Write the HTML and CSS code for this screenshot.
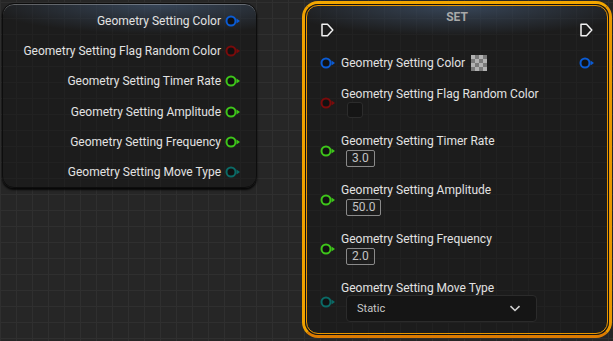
FILE: index.html
```html
<!DOCTYPE html>
<html lang="en">
<head>
    <meta charset="UTF-8">
    <title>Blueprint - Set Geometry Settings</title>
    <link rel="stylesheet" href="styles.css">
</head>
<body>
    <div class="canvas">
        <!-- variable getter node -->
        <div class="node node-vars">
            <ul class="out-list">
                <li class="out-row">Geometry Setting Color
                    <svg class="pin pin-blue" viewBox="0 0 16 12"><circle cx="6" cy="6" r="4.5"/><path d="M11.5 3.5 L15 6 L11.5 8.5 Z"/></svg>
                </li>
                <li class="out-row">Geometry Setting Flag Random Color
                    <svg class="pin pin-red" viewBox="0 0 16 12"><circle cx="6" cy="6" r="4.5"/><path d="M11.5 3.5 L15 6 L11.5 8.5 Z"/></svg>
                </li>
                <li class="out-row">Geometry Setting Timer Rate
                    <svg class="pin pin-green" viewBox="0 0 16 12"><circle cx="6" cy="6" r="4.5"/><path d="M11.5 3.5 L15 6 L11.5 8.5 Z"/></svg>
                </li>
                <li class="out-row">Geometry Setting Amplitude
                    <svg class="pin pin-green" viewBox="0 0 16 12"><circle cx="6" cy="6" r="4.5"/><path d="M11.5 3.5 L15 6 L11.5 8.5 Z"/></svg>
                </li>
                <li class="out-row">Geometry Setting Frequency
                    <svg class="pin pin-green" viewBox="0 0 16 12"><circle cx="6" cy="6" r="4.5"/><path d="M11.5 3.5 L15 6 L11.5 8.5 Z"/></svg>
                </li>
                <li class="out-row">Geometry Setting Move Type
                    <svg class="pin pin-teal" viewBox="0 0 16 12"><circle cx="6" cy="6" r="4.5"/><path d="M11.5 3.5 L15 6 L11.5 8.5 Z"/></svg>
                </li>
            </ul>
        </div>

        <!-- selected SET node -->
        <div class="selection">
            <div class="node node-set">
                <div class="set-title">SET</div>
                <div class="exec-row">
                    <svg class="exec" viewBox="0 0 13 14"><path d="M1 1.2 H6.5 L11.8 7 L6.5 12.8 H1 Z"/></svg>
                    <svg class="exec" viewBox="0 0 13 14"><path d="M1 1.2 H6.5 L11.8 7 L6.5 12.8 H1 Z"/></svg>
                </div>

                <div class="set-rows">
                    <div class="in-row">
                        <svg class="pin pin-blue" viewBox="0 0 16 12"><circle cx="6" cy="6" r="4.5"/><path d="M11.5 3.5 L15 6 L11.5 8.5 Z"/></svg>
                        <span class="in-label">Geometry Setting Color</span>
                        <span class="swatch-checker"></span>
                        <svg class="pin pin-blue pin-out" viewBox="0 0 16 12"><circle cx="6" cy="6" r="4.5"/><path d="M11.5 3.5 L15 6 L11.5 8.5 Z"/></svg>
                    </div>

                    <div class="in-row">
                        <svg class="pin pin-red" viewBox="0 0 16 12"><circle cx="6" cy="6" r="4.5"/><path d="M11.5 3.5 L15 6 L11.5 8.5 Z"/></svg>
                        <div class="in-field">
                            <span class="in-label">Geometry Setting Flag Random Color</span>
                            <span class="checkbox"></span>
                        </div>
                    </div>

                    <div class="in-row">
                        <svg class="pin pin-green" viewBox="0 0 16 12"><circle cx="6" cy="6" r="4.5"/><path d="M11.5 3.5 L15 6 L11.5 8.5 Z"/></svg>
                        <div class="in-field">
                            <span class="in-label">Geometry Setting Timer Rate</span>
                            <span class="num-box">3.0</span>
                        </div>
                    </div>

                    <div class="in-row">
                        <svg class="pin pin-green" viewBox="0 0 16 12"><circle cx="6" cy="6" r="4.5"/><path d="M11.5 3.5 L15 6 L11.5 8.5 Z"/></svg>
                        <div class="in-field">
                            <span class="in-label">Geometry Setting Amplitude</span>
                            <span class="num-box">50.0</span>
                        </div>
                    </div>

                    <div class="in-row">
                        <svg class="pin pin-green" viewBox="0 0 16 12"><circle cx="6" cy="6" r="4.5"/><path d="M11.5 3.5 L15 6 L11.5 8.5 Z"/></svg>
                        <div class="in-field">
                            <span class="in-label">Geometry Setting Frequency</span>
                            <span class="num-box">2.0</span>
                        </div>
                    </div>

                    <div class="in-row">
                        <svg class="pin pin-teal" viewBox="0 0 16 12"><circle cx="6" cy="6" r="4.5"/><path d="M11.5 3.5 L15 6 L11.5 8.5 Z"/></svg>
                        <div class="in-field">
                            <span class="in-label">Geometry Setting Move Type</span>
                            <div class="dropdown">
                                <span>Static</span>
                                <svg class="chevron" viewBox="0 0 12 7"><path d="M1.5 1.2 L6 5.5 L10.5 1.2"/></svg>
                            </div>
                        </div>
                    </div>
                </div>
            </div>
        </div>
    </div>
</body>
</html>
```

FILE: styles.css
```css
:root {
    --canvas-bg: #262626;
    --grid-line: #2f2f2f;
    --text-color: #e2e2e2;
    --pin-blue: #0b5bd3;
    --pin-red: #7a0b0b;
    --pin-green: #3ec51a;
    --pin-teal: #0b6a66;
    --select-orange: #f2a400;
}

* {
    box-sizing: border-box;
    margin: 0;
    padding: 0;
}

body {
    font-family: Roboto, 'Liberation Sans', sans-serif;
    background-color: var(--canvas-bg);
    color: var(--text-color);
    overflow: hidden;
}

.canvas {
    position: relative;
    width: 613px;
    height: 341px;
    background-color: var(--canvas-bg);
    background-image:
        linear-gradient(to right, var(--grid-line) 1px, transparent 1px),
        linear-gradient(to bottom, var(--grid-line) 1px, transparent 1px);
    background-size: 16px 16px;
    background-position: 0 2px;
}

/* nodes */
.node {
    border-radius: 12px;
    background-color: rgba(14, 14, 14, 0.42);
}

.node-vars {
    position: absolute;
    left: 2px;
    top: 3px;
    width: 255px;
    height: 185px;
    border: 1px solid #0d0d0d;
    box-shadow: inset 0 1px 0 rgba(255, 255, 255, 0.28), 0 2px 2px rgba(0, 0, 0, 0.85);
    background-image: radial-gradient(ellipse 70% 30px at 62% 0, rgba(78, 104, 138, 0.55), rgba(78, 104, 138, 0) 100%);
    background-repeat: no-repeat;
}

.out-list {
    list-style-type: none;
    padding: 2px 15px 0 0;
}

.out-row {
    display: flex;
    justify-content: flex-end;
    align-items: center;
    gap: 4px;
    height: 30.2px;
    font-size: 12px;
}

.pin {
    width: 16px;
    height: 12px;
    flex-shrink: 0;
}

.pin circle {
    fill: #111;
    stroke: currentColor;
    stroke-width: 2;
}

.pin path {
    fill: currentColor;
}

.pin-blue { color: var(--pin-blue); }
.pin-red { color: var(--pin-red); }
.pin-green { color: var(--pin-green); }
.pin-teal { color: var(--pin-teal); }

/* SET node with selection outline */
.selection {
    position: absolute;
    left: 302px;
    top: 1px;
    width: 310px;
    height: 337px;
    padding: 1px;
    border: 3px solid var(--select-orange);
    border-color: #f3a700 #eb9800 #dc7b00 #eea000;
    border-radius: 16px;
}

.node-set {
    height: 100%;
    border: 1px solid #e89600;
    box-shadow: 0 0 0 1px rgba(0, 0, 0, 0.55);
    background-image: radial-gradient(ellipse 60% 30px at 50% 0, rgba(78, 104, 138, 0.55), rgba(78, 104, 138, 0) 100%);
    background-repeat: no-repeat;
}

.set-title {
    padding-top: 4px;
    height: 18px;
    line-height: 14px;
    text-align: center;
    font-size: 12px;
    font-weight: bold;
    color: #a9a9a9;
}

.exec-row {
    display: flex;
    justify-content: space-between;
    padding: 0 14px;
    margin-top: -1px;
    height: 14px;
}

.exec {
    width: 13px;
    height: 14px;
}

.exec path {
    fill: none;
    stroke: #f2f2f2;
    stroke-width: 1.5;
    stroke-linejoin: round;
}

.set-rows {
    display: flex;
    flex-direction: column;
    gap: 16px;
    padding: 18px 12px 0 13px;
}

.in-row {
    display: flex;
    align-items: center;
    gap: 5px;
}

.in-field {
    display: flex;
    flex-direction: column;
    align-items: flex-start;
}

.in-label {
    font-size: 12px;
    line-height: 14px;
    color: var(--text-color);
}

.swatch-checker {
    width: 16px;
    height: 16px;
    margin-left: 1px;
    background-color: #a0a0a0;
    background-image: conic-gradient(#7a7a7a 25%, #b2b2b2 0 50%, #7a7a7a 0 75%, #b2b2b2 0);
    background-size: 8px 8px;
}

.pin-out {
    margin-left: auto;
}

.checkbox {
    width: 16px;
    height: 16px;
    margin: 1px 0 0 6px;
    background-color: #151515;
    border: 1px solid #2c2c2c;
    border-radius: 3px;
}

.num-box {
    margin: 2px 0 0 5px;
    height: 17px;
    padding: 0 5px;
    line-height: 15px;
    font-size: 12px;
    color: #c4c4c4;
    border: 1px solid #8a8a8a;
    border-radius: 2px;
}

.dropdown {
    display: flex;
    align-items: center;
    justify-content: space-between;
    width: 191px;
    height: 27px;
    margin: 0 0 0 5px;
    padding: 0 15px 0 10px;
    font-size: 11px;
    color: #c8c8c8;
    background-color: #151515;
    border: 1px solid #2b2b2b;
    border-radius: 4px;
}

.chevron {
    width: 12px;
    height: 7px;
}

.chevron path {
    fill: none;
    stroke: #d0d0d0;
    stroke-width: 1.6;
}
```
